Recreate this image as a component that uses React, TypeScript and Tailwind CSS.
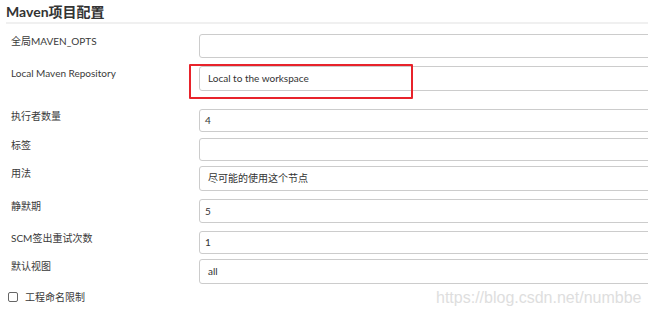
import React from 'react';

interface Row {
  label: string;
  value: string;
  mt: string;
  h: string;
  pad: string;
  marked?: boolean;
}

const rows: Row[] = [
  { label: '全局MAVEN_OPTS', value: '', mt: 'mt-[10px]', h: 'h-[24px]', pad: 'pl-[5px]' },
  { label: 'Local Maven Repository', value: 'Local to the workspace', mt: 'mt-[8px]', h: 'h-[25px]', pad: 'pl-[8px]', marked: true },
  { label: '执行者数量', value: '4', mt: 'mt-[18px]', h: 'h-[23px]', pad: 'pl-[5px]' },
  { label: '标签', value: '', mt: 'mt-[6px]', h: 'h-[23px]', pad: 'pl-[5px]' },
  { label: '用法', value: '尽可能的使用这个节点', mt: 'mt-[5px]', h: 'h-[25px]', pad: 'pl-[8px]' },
  { label: '静默期', value: '5', mt: 'mt-[8px]', h: 'h-[24px]', pad: 'pl-[5px]' },
  { label: 'SCM签出重试次数', value: '1', mt: 'mt-[8px]', h: 'h-[23px]', pad: 'pl-[5px]' },
  { label: '默认视图', value: 'all', mt: 'mt-[5px]', h: 'h-[25px]', pad: 'pl-[8px]' },
];

export default function App() {
  return (
    <div className="relative w-[648px] h-[317px] overflow-hidden bg-white text-[#333] font-['Lato','Noto_Sans_CJK_SC',sans-serif]">
      <div className="pl-[6px] w-[700px]">
        <h2 className="pt-[3px] text-[14px] leading-[18px] font-bold text-[#333]">Maven项目配置</h2>
        <div className="mt-[1px] border-b-2 border-[#f0f0f0]" />

        {rows.map((row) => (
          <div key={row.label} className={`flex ${row.mt}`}>
            <div className="w-[193px] shrink-0 pl-[5px] text-[10px] leading-[15px] text-[#3a3a3a]">{row.label}</div>
            <div className="relative">
              <div
                className={`w-[470px] ${row.h} ${row.pad} flex items-center border border-[#ccc] rounded-[3px] bg-white text-[10px] text-[#333]`}
              >
                {row.value}
              </div>
              {row.marked && (
                <div className="absolute left-[-10px] top-[-2px] w-[224px] h-[35px] border-2 border-[#e8232b] rounded-[1px]" />
              )}
            </div>
          </div>
        ))}

        <label className="flex items-center gap-[7px] mt-[5px] pl-[2px] text-[10px] leading-[16px] text-[#3a3a3a]">
          <span className="w-[10px] h-[10px] border border-[#666] rounded-[2px] bg-white" />
          工程命名限制
        </label>
      </div>

      <div className="absolute left-[436px] top-[288px] text-[16px] leading-[20px] text-[#dedede] font-['Liberation_Sans',sans-serif]">
        https://blog.csdn.net/numbbe
      </div>
    </div>
  );
}
